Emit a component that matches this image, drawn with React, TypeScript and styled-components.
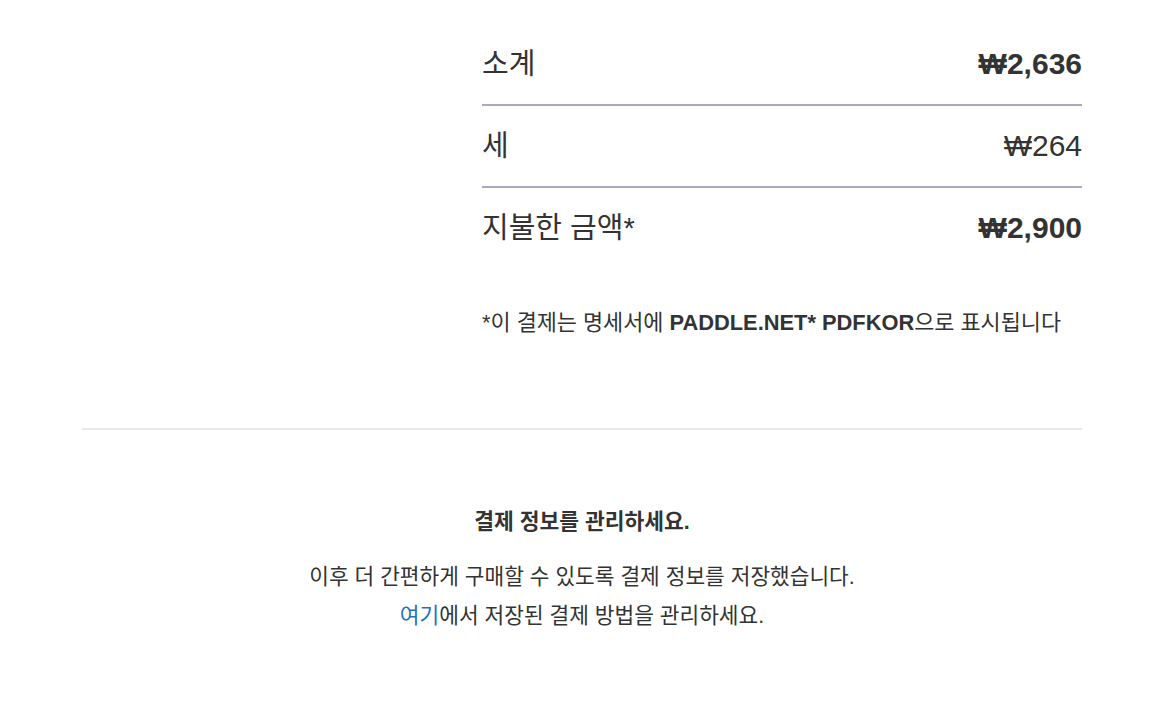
import styled, { createGlobalStyle } from "styled-components";

const GlobalStyle = createGlobalStyle`
  html, body {
    margin: 0;
    padding: 0;
    background: #ffffff;
  }
  body {
    font-family: "Liberation Sans", "Noto Sans CJK KR", sans-serif;
    color: #333333;
  }
`;

const Page = styled.div`
  width: 1000px;
  margin: 0 auto;
  padding-top: 24px;
`;

const Summary = styled.div`
  width: 600px;
  margin-left: auto;
`;

const Row = styled.div<{ $last?: boolean }>`
  display: flex;
  justify-content: space-between;
  align-items: center;
  padding: 20px 0;
  line-height: 40px;
  border-bottom: ${(p) => (p.$last ? "none" : "2px solid #a9a9c1")};
`;

const Label = styled.span`
  font-size: 29px;
`;

const Amount = styled.span<{ $bold?: boolean }>`
  font-size: 30px;
  font-weight: ${(p) => (p.$bold ? 700 : 400)};
`;

const Note = styled.p`
  margin: 40px 0 0;
  font-size: 21.85px;
  line-height: 30px;
  color: #333333;
  b {
    font-weight: 700;
  }
`;

const Divider = styled.hr`
  border: none;
  border-top: 2px solid #e8e8e8;
  margin: 90px 0 0;
`;

const Manage = styled.section`
  padding-top: 77px;
  text-align: center;
`;

const Heading = styled.h3`
  margin: 0 0 21px;
  font-size: 21.5px;
  line-height: 30px;
  font-weight: 700;
`;

const Text = styled.p`
  margin: 0;
  font-size: 21.4px;
  line-height: 39px;
`;

const Link = styled.a`
  color: #1f6fc5;
  text-decoration: none;
`;

export default function App() {
  return (
    <>
      <GlobalStyle />
      <Page>
        <Summary>
          <Row>
            <Label>소계</Label>
            <Amount $bold>₩2,636</Amount>
          </Row>
          <Row>
            <Label>세</Label>
            <Amount>₩264</Amount>
          </Row>
          <Row $last>
            <Label>지불한 금액*</Label>
            <Amount $bold>₩2,900</Amount>
          </Row>
          <Note>
            *이 결제는 명세서에 <b>PADDLE.NET* PDFKOR</b>으로 표시됩니다
          </Note>
        </Summary>
        <Divider />
        <Manage>
          <Heading>결제 정보를 관리하세요.</Heading>
          <Text>이후 더 간편하게 구매할 수 있도록 결제 정보를 저장했습니다.</Text>
          <Text>
            <Link href="#">여기</Link>에서 저장된 결제 방법을 관리하세요.
          </Text>
        </Manage>
      </Page>
    </>
  );
}
